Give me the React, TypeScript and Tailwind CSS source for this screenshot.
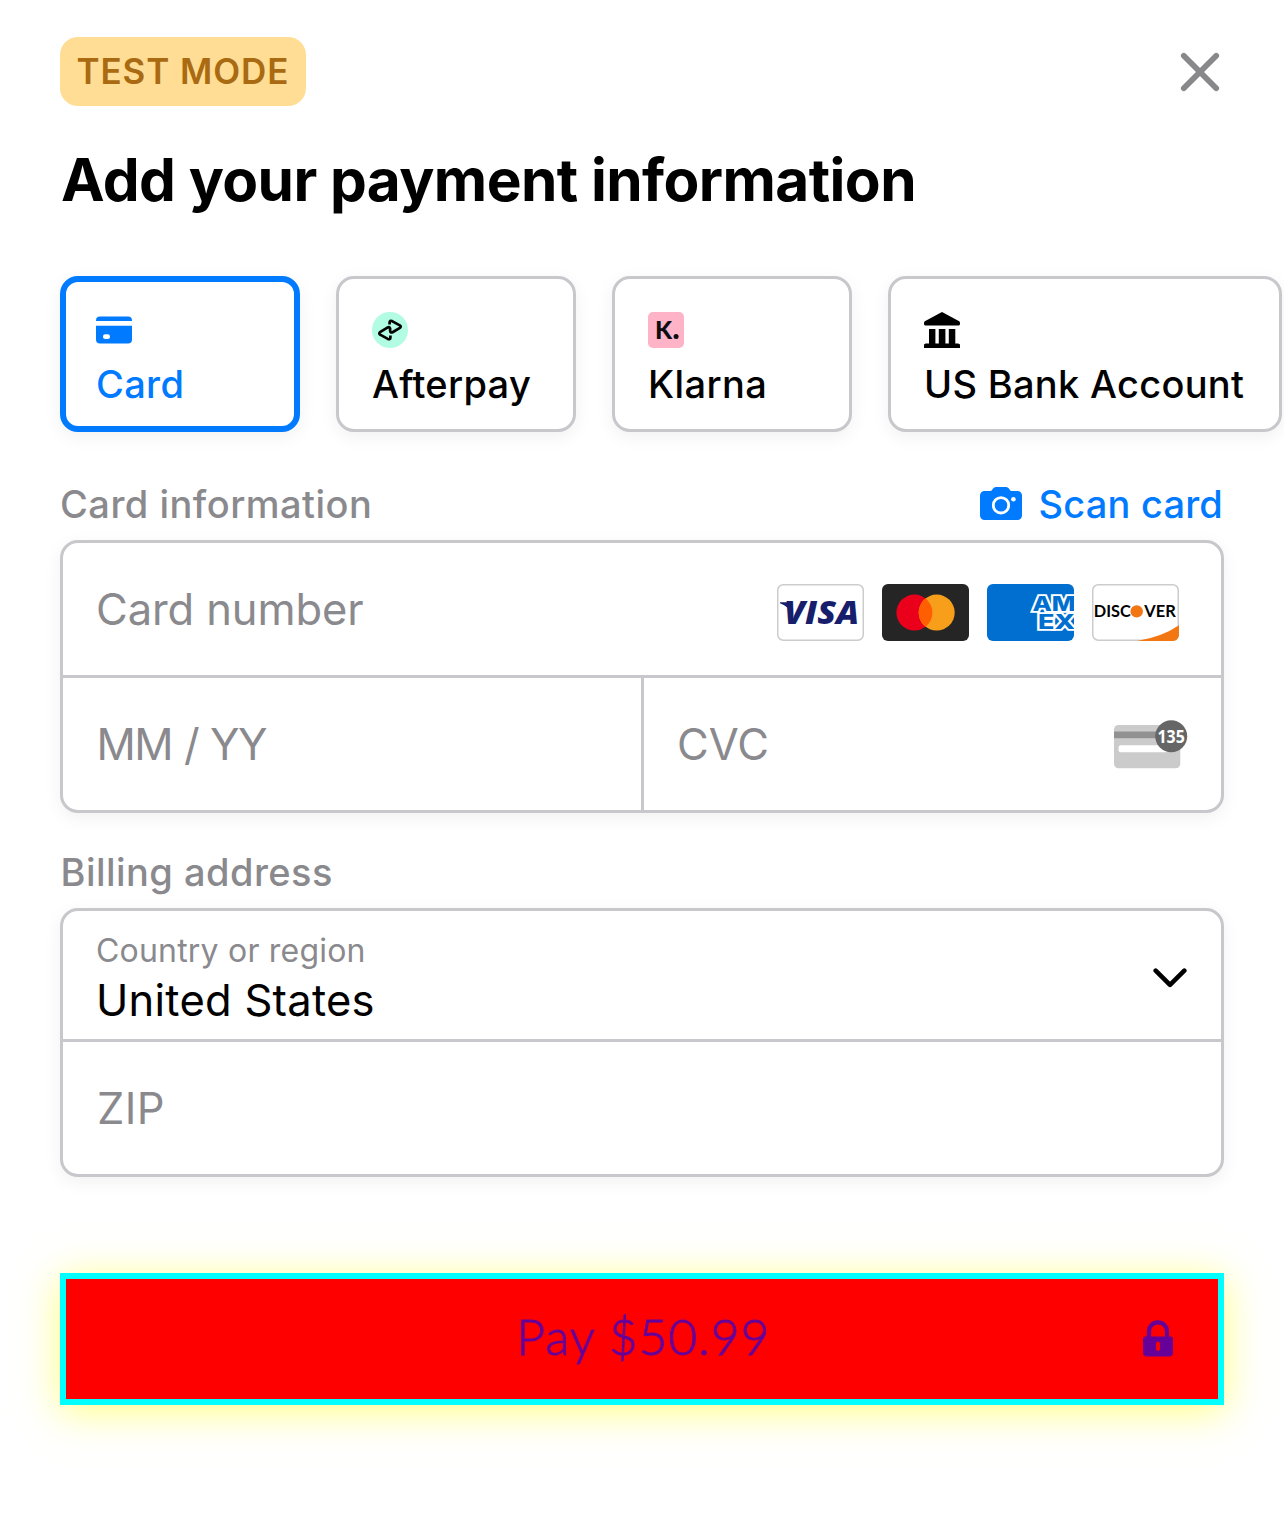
import type { ReactNode } from "react";

function CloseIcon() {
  return (
    <svg width="40" height="40" viewBox="0 0 40 40" fill="none" stroke="#87878c" strokeWidth="5.8" strokeLinecap="round">
      <path d="M3.8 3.8 36.2 36.2M36.2 3.8 3.8 36.2" />
    </svg>
  );
}

function CardIcon() {
  return (
    <svg width="36" height="36" viewBox="0 0 36 36" fill="#007aff" className="shrink-0">
      <path d="M0 9V8.5a4 4 0 0 1 4-4H32a4 4 0 0 1 4 4V9Z" />
      <path
        fillRule="evenodd"
        d="M0 13.7H36V27.5a4 4 0 0 1-4 4H4a4 4 0 0 1-4-4ZM9.3 22.3a2.3 2.3 0 0 0 0 4.7h2.4a2.3 2.3 0 0 0 0-4.7Z"
      />
    </svg>
  );
}

function AfterpayIcon() {
  return (
    <svg width="36" height="36" viewBox="0 0 36 36" className="shrink-0">
      <circle cx="18" cy="18" r="18" fill="#b2fce4" />
      <g fill="none" stroke="#000" strokeWidth="2.7" strokeLinejoin="round">
        <path d="M17.6 12.6V10.4Q17.8 8.2 20 9.1L27.8 13.4Q29.6 14.6 27.9 15.9L21 20Q18.4 21.4 18.1 18.8V16.6Q17.6 14.2 15.4 15.6L8 20.2Q6.6 21.4 8.1 22.6L15.8 26.9Q18.2 28 18.4 25.6V23.6" />
      </g>
    </svg>
  );
}

function KlarnaIcon() {
  return (
    <svg width="36" height="36" viewBox="0 0 36 36" className="shrink-0">
      <rect width="36" height="36" rx="5" fill="#ffb3c7" />
      <text x="7" y="27" fontFamily="Lato" fontWeight="900" fontSize="25" textLength="17.5" lengthAdjust="spacingAndGlyphs" fill="#0b0d11">
        K
      </text>
      <circle cx="28.1" cy="24.6" r="2.5" fill="#0b0d11" />
    </svg>
  );
}

function BankIcon() {
  return (
    <svg width="36" height="36" viewBox="0 0 36 36" fill="#000" className="shrink-0">
      <path d="M18 0 35.2 9.2Q36 9.7 36 10.8V12Q36 13.5 34.3 13.5H1.7Q0 13.5 0 12V10.8Q0 9.7.8 9.2Z" />
      <path d="M5 17h6.4v14.5h3.4V17h6.6v14.5h3.4V17h6.5v14.5H34.2L36 32.6V36H0V32.6L1.6 31.5H5Z" />
    </svg>
  );
}

function CameraIcon() {
  return (
    <svg width="42" height="34" viewBox="0 0 42 34" fill="#007aff">
      <path d="M4.5 4H10.5C12.5 4 12.6 0 16 0H26C29.4 0 29.5 4 31.5 4H37.5A4.5 4.5 0 0 1 42 8.5V28.5A4.5 4.5 0 0 1 37.5 33H4.5A4.5 4.5 0 0 1 0 28.5V8.5A4.5 4.5 0 0 1 4.5 4Z" />
      <circle cx="21" cy="18.3" r="7.7" stroke="#fff" strokeWidth="2.8" />
      <circle cx="33.4" cy="12.3" r="2.3" fill="#fff" />
    </svg>
  );
}

function Visa() {
  return (
    <svg width="87" height="57" viewBox="0 0 87 57">
      <rect x=".75" y=".75" width="85.5" height="55.5" rx="5.5" fill="#fff" stroke="#ccc" strokeWidth="1.5" />
      <path d="M3 18.3H9.5Q13 18.6 14 22L16 31Q12 22.5 3 19.2Z" fill="#171e6c" />
      <text x="7" y="40.3" fontFamily="Open Sans" fontWeight="800" fontStyle="italic" fontSize="31" textLength="75" lengthAdjust="spacingAndGlyphs" fill="#171e6c">
        VISA
      </text>
    </svg>
  );
}

function Mastercard() {
  return (
    <svg width="87" height="57" viewBox="0 0 87 57">
      <rect width="87" height="57" rx="6" fill="#252525" />
      <circle cx="32.4" cy="28.6" r="18" fill="#eb001b" />
      <circle cx="54.7" cy="28.6" r="18" fill="#f79e1b" />
      <path d="M43.55 14.45a18 18 0 0 1 0 28.3 18 18 0 0 1 0-28.3Z" fill="#ff5f00" />
    </svg>
  );
}

function Amex() {
  return (
    <svg width="87" height="57" viewBox="0 0 87 57" className="rounded-md">
      <rect width="87" height="57" fill="#016fd0" />
      <g fontFamily="Inter" fontWeight="800" fontSize="20" fill="#016fd0" stroke="#fff" strokeWidth="3.6" paintOrder="stroke" strokeLinejoin="miter">
        <text x="45.5" y="27.2" textLength="43" lengthAdjust="spacingAndGlyphs">
          AM
        </text>
        <text x="51" y="45.4" textLength="37" lengthAdjust="spacingAndGlyphs">
          EX
        </text>
      </g>
    </svg>
  );
}

function Discover() {
  return (
    <svg width="87" height="57" viewBox="0 0 87 57">
      <rect x=".75" y=".75" width="85.5" height="55.5" rx="5.5" fill="#fff" stroke="#ccc" strokeWidth="1.5" />
      <path d="M45 57Q70 53 87 41.3V51a6 6 0 0 1-6 6Z" fill="#f27712" />
      <g fontFamily="Lato" fontWeight="700" fontSize="16.3" fill="#000">
        <text x="1.8" y="33.3" textLength="37" lengthAdjust="spacingAndGlyphs">
          DISC
        </text>
        <text x="52.3" y="33.3" textLength="31.5" lengthAdjust="spacingAndGlyphs">
          VER
        </text>
      </g>
      <circle cx="44.7" cy="27.4" r="6.2" fill="#f27712" />
    </svg>
  );
}

function CvcIcon() {
  return (
    <svg width="74" height="50" viewBox="0 0 74 50" className="mt-0.5 overflow-visible">
      <rect y="5" width="66.3" height="43.3" rx="4.5" fill="#cbcbcb" />
      <rect y="11.5" width="60" height="6.7" fill="#919191" />
      <rect x="4.6" y="25.3" width="50" height="7" rx="2" fill="#fff" />
      <circle cx="57.2" cy="16.2" r="16" fill="#666" />
      <text x="43.5" y="23" fontFamily="Noto Sans" fontWeight="700" fontSize="18.5" textLength="27.3" lengthAdjust="spacingAndGlyphs" fill="#fff">
        135
      </text>
    </svg>
  );
}

function ChevronIcon() {
  return (
    <svg width="34" height="20" viewBox="0 0 34 20" fill="none" stroke="#000" strokeWidth="4.6" strokeLinecap="round" strokeLinejoin="round">
      <path d="M2.7 2.7 17 16.9 31.3 2.7" />
    </svg>
  );
}

function LockIcon() {
  return (
    <svg width="30" height="37" viewBox="0 0 30 37">
      <path d="M6 18V11.3a9 9 0 0 1 18 0V18" fill="none" stroke="#609" strokeWidth="4.2" />
      <path
        fill="#609"
        fillRule="evenodd"
        d="M2 16.5H28a2 2 0 0 1 2 2V32.5a4 4 0 0 1-4 4H4a4 4 0 0 1-4-4V18.5a2 2 0 0 1 2-2ZM13 23.5V29a2 2 0 0 0 4 0V23.5a2 2 0 0 0-4 0Z"
      />
    </svg>
  );
}

function Tab({ icon, label, selected, className }: { icon: ReactNode; label: string; selected?: boolean; className: string }) {
  return (
    <button
      className={`flex h-[156px] shrink-0 flex-col items-start gap-3 rounded-[18px] bg-white text-left text-[38px] leading-[48px] font-medium whitespace-nowrap shadow-[0_5px_18px_rgba(0,0,0,0.06)] ${
        selected ? "border-[6px] border-[#007aff] px-[30px] pt-[30px] text-[#007aff]" : "border-[3px] border-[#c7c7cc] px-[33px] pt-[33px] text-black"
      } ${className}`}
    >
      {icon}
      <span>{label}</span>
    </button>
  );
}

const panel = "overflow-hidden rounded-[18px] border-[3px] border-[#c7c7cc] bg-white shadow-[0_5px_18px_rgba(0,0,0,0.06)]";

export default function App() {
  return (
    <main className="h-[1513px] w-[1284px] overflow-hidden bg-white px-[60px] pt-[37px] font-['Inter',sans-serif] text-[43.5px] text-[#8a8a8e]">
      <header className="flex h-[69px] items-center justify-between">
        <span className="flex h-[69px] w-[246px] items-center rounded-[18px] bg-[#ffdd94] pl-[16.5px] text-[35px] font-semibold tracking-[0.9px] text-[#a96a12]">
          TEST MODE
        </span>
        <button className="mr-1" aria-label="Close">
          <CloseIcon />
        </button>
      </header>

      <h1 className="mt-[38px] pl-px text-[58.5px] leading-[72px] font-bold tracking-[-0.57px] whitespace-nowrap text-black">
        Add your payment information
      </h1>

      <nav className="mt-[60px] flex gap-9">
        <Tab icon={<CardIcon />} label="Card" selected className="w-[240px] tracking-[0.33px]" />
        <Tab icon={<AfterpayIcon />} label="Afterpay" className="w-[240px] tracking-[0.3px]" />
        <Tab icon={<KlarnaIcon />} label="Klarna" className="w-[240px] tracking-[0.4px]" />
        <Tab icon={<BankIcon />} label="US Bank Account" className="w-[394px] tracking-[0.3px]" />
      </nav>

      <div className="mt-12 flex items-center justify-between text-[38px] leading-[48px] font-medium">
        <h2 className="tracking-[0.48px]">Card information</h2>
        <button className="flex items-center gap-[17px] pr-px tracking-[0.18px] text-[#007aff]">
          <CameraIcon />
          <span>Scan card</span>
        </button>
      </div>

      <section className={`mt-3 h-[273px] ${panel}`}>
        <div className="flex h-[135px] items-center justify-between border-b-[3px] border-[#c7c7cc] pr-[42px] pl-[33px]">
          <span className="pt-0.5 tracking-[-0.1px]">Card number</span>
          <div className="flex gap-[18px] pt-[7px]">
            <Visa />
            <Mastercard />
            <Amex />
            <Discover />
          </div>
        </div>
        <div className="flex h-[132px]">
          <div className="flex w-[581px] items-center border-r-[3px] border-[#c7c7cc] pt-0.5 pl-[33.5px] tracking-[-1.6px] [word-spacing:1.4px]">
            MM / YY
          </div>
          <div className="flex flex-1 items-center justify-between pr-[33px] pl-[33px]">
            <span className="pt-0.5">CVC</span>
            <CvcIcon />
          </div>
        </div>
      </section>

      <h2 className="mt-[35px] pl-[0.5px] text-[38px] leading-[48px] font-medium tracking-[0.46px]">Billing address</h2>

      <section className={`mt-3 h-[269px] ${panel}`}>
        <div className="flex h-[131px] items-center justify-between border-b-[3px] border-[#c7c7cc] pr-[34px] pl-[33px]">
          <div className="flex h-full flex-col pt-5">
            <span className="text-[32px] leading-[40px] tracking-[0.2px]">Country or region</span>
            <span className="-mt-px leading-[60px] tracking-[0.25px] text-black">United States</span>
          </div>
          <div className="pt-1.5">
            <ChevronIcon />
          </div>
        </div>
        <div className="flex h-[132px] items-center pt-0.5 pl-[34px] tracking-[0.4px]">ZIP</div>
      </section>

      <button className="mt-24 grid h-[132px] w-full grid-cols-[1fr_auto_1fr] items-center border-[6px] border-[#00ffff] bg-[#ff0000] shadow-[0_6px_38px_rgba(255,255,0,0.5)]">
        <span className="col-start-2 pb-[6px] pl-[3px] font-['Lato',sans-serif] text-[49.5px] leading-[60px] font-light tracking-[1.04px] text-[#660099] [-webkit-text-stroke:0.9px_#660099]">
          Pay $50.99
        </span>
        <span className="mr-[45px] justify-self-end pb-px">
          <LockIcon />
        </span>
      </button>
    </main>
  );
}
